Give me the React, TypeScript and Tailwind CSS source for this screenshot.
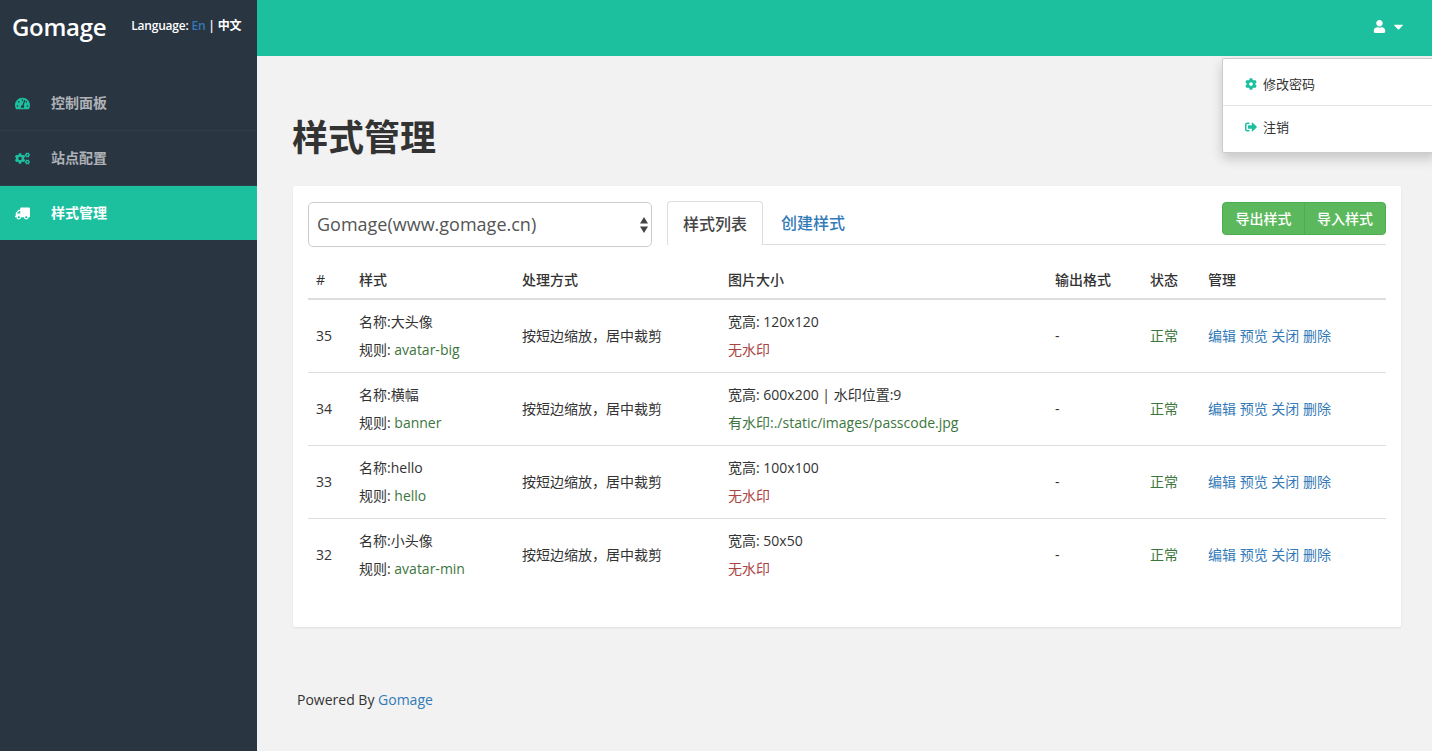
import { FaCaretDown, FaCog, FaCogs, FaSignOutAlt, FaTachometerAlt, FaTruck, FaUser } from "react-icons/fa";

const font = "font-['Open_Sans','Noto_Sans_CJK_SC',sans-serif]";

const rows = [
  { id: 35, name: "大头像", rule: "avatar-big", size: "宽高: 120x120", mark: "无水印", has: false },
  { id: 34, name: "横幅", rule: "banner", size: "宽高: 600x200 | 水印位置:9", mark: "有水印:./static/images/passcode.jpg", has: true },
  { id: 33, name: "hello", rule: "hello", size: "宽高: 100x100", mark: "无水印", has: false },
  { id: 32, name: "小头像", rule: "avatar-min", size: "宽高: 50x50", mark: "无水印", has: false },
];

const heads = ["#", "样式", "处理方式", "图片大小", "输出格式", "状态", "管理"];

function SideItem({ icon, label, active }: { icon: React.ReactNode; label: string; active?: boolean }) {
  return (
    <a
      className={
        active
          ? "flex h-[54px] items-center bg-[#1cc09f] pl-[15px] text-sm font-semibold text-white"
          : "flex h-[54px] items-center border-b border-[#303c4b] pl-[15px] text-sm font-semibold text-[#aeb2b7] box-content"
      }
    >
      <span className={active ? "w-9 text-[15px] text-white" : "w-9 text-[15px] text-[#1cc09f]"}>{icon}</span>
      {label}
    </a>
  );
}

export default function App() {
  return (
    <div className={`${font} relative flex h-[751px] overflow-hidden bg-[#f2f2f2] text-sm text-[#333]`}>
      {/* sidebar */}
      <aside className="w-[257px] shrink-0 bg-[#2a3542]">
        <div className="flex h-[56px] items-center pb-[3px] pl-3">
          <span className="text-2xl leading-none font-semibold tracking-[-0.3px] text-white">Gomage</span>
          <span className="ml-[25px] -translate-y-px text-xs font-semibold tracking-[-0.2px] text-white">
            Language: <span className="text-[#337ab7]">En</span> | 中文
          </span>
        </div>
        <nav className="mt-5">
          <SideItem icon={<FaTachometerAlt />} label="控制面板" />
          <SideItem icon={<FaCogs />} label="站点配置" />
          <SideItem icon={<FaTruck className="-scale-x-100" />} label="样式管理" active />
        </nav>
      </aside>

      <div className="flex min-w-0 flex-1 flex-col">
        <header className="flex h-[56px] items-center justify-end gap-[5px] bg-[#1cc09f] pr-[26px] pb-1 text-white">
          <FaUser className="text-[13px]" />
          <FaCaretDown className="text-[15px]" />
        </header>

        <main className="flex-1 pr-[31px] pl-9">
          <h1 className="mt-[57px] -ml-px text-[36px] leading-[50px] font-bold text-[#333]">样式管理</h1>

          <section className="mt-[23px] h-[441px] rounded-[2px] bg-white px-[15px] pt-[15px] shadow-[0_1px_2px_rgba(0,0,0,0.08)]">
            <div className="flex items-start">
              <div className="relative mt-px w-[344px]">
                <select className="h-[45px] w-full appearance-none rounded-[5px] border border-[#ccc] bg-white pb-[2px] pl-2 text-lg text-[#555]">
                  <option>Gomage(www.gomage.cn)</option>
                </select>
                <svg className="pointer-events-none absolute top-[15px] right-[4px] h-4 w-[8px]" viewBox="0 0 8 16" aria-hidden>
                  <path d="M4 0 8 6.5H0zM4 16 0 9.5h8z" fill="#444" />
                </svg>
              </div>

              <div className="ml-[15px] flex h-[44px] flex-1 border-b border-[#ddd]">
                <span className="flex h-[44px] w-[96px] items-center justify-center rounded-t-[4px] border border-b-0 border-[#ddd] bg-white text-base font-medium text-[#444]">
                  样式列表
                </span>
                <span className="ml-[18px] flex h-[43px] items-center text-base font-medium text-[#337ab7]">创建样式</span>
                <div className="mt-px ml-auto flex h-[33px] overflow-hidden rounded-[4px] border border-[#4cae4c] bg-[#5cb85c] text-sm font-medium text-white">
                  <span className="flex w-[82px] items-center justify-center border-r border-[#4cae4c]">导出样式</span>
                  <span className="flex w-[80px] items-center justify-center">导入样式</span>
                </div>
              </div>
            </div>

            <table className="w-[1078px] table-fixed border-collapse">
              <colgroup>
                <col className="w-[43px]" />
                <col className="w-[163px]" />
                <col className="w-[206px]" />
                <col className="w-[327px]" />
                <col className="w-[95px]" />
                <col className="w-[58px]" />
                <col className="w-[186px]" />
              </colgroup>
              <thead>
                <tr className="h-[52px] border-b-2 border-[#ddd]">
                  {heads.map((h) => (
                    <th key={h} className="px-2 pt-[15px] pb-[8px] text-left align-bottom text-sm leading-5 font-medium">
                      {h}
                    </th>
                  ))}
                </tr>
              </thead>
              <tbody>
                {rows.map((r) => (
                  <tr key={r.id} className="border-b border-[#ddd] leading-7 last:border-b-0">
                    <td className="p-2 align-middle">{r.id}</td>
                    <td className="p-2 align-middle">
                      <div>名称:{r.name}</div>
                      <div>
                        规则: <span className="text-[#3c763d]">{r.rule}</span>
                      </div>
                    </td>
                    <td className="p-2 align-middle">按短边缩放，居中裁剪</td>
                    <td className="p-2 align-middle">
                      <div>{r.size}</div>
                      <div className={r.has ? "text-[#3c763d]" : "text-[#a94442]"}>{r.mark}</div>
                    </td>
                    <td className="p-2 align-middle">-</td>
                    <td className="p-2 align-middle text-[#3c763d]">正常</td>
                    <td className="p-2 align-middle text-[#337ab7]">编辑 预览 关闭 删除</td>
                  </tr>
                ))}
              </tbody>
            </table>
          </section>

          <p className="mt-[63px] pl-1 leading-5">
            Powered By <span className="text-[#337ab7]">Gomage</span>
          </p>
        </main>
      </div>

      {/* user dropdown */}
      <div className="absolute top-[58px] right-[-4px] w-[214px] rounded-[2px] border border-[#ccc] bg-white text-[13px] shadow-[0_6px_12px_rgba(0,0,0,0.175)]">
        <div className="flex h-[47px] items-center border-b border-[#e5e5e5] pt-[4px] pl-[22px] text-[#333]">
          <FaCog className="mr-[6px] text-[12px] text-[#1cc09f]" />
          修改密码
        </div>
        <div className="flex h-[46px] items-center pb-1 pl-[22px] text-[#333]">
          <FaSignOutAlt className="mr-[6px] text-[12px] text-[#1cc09f]" />
          注销
        </div>
      </div>
    </div>
  );
}
